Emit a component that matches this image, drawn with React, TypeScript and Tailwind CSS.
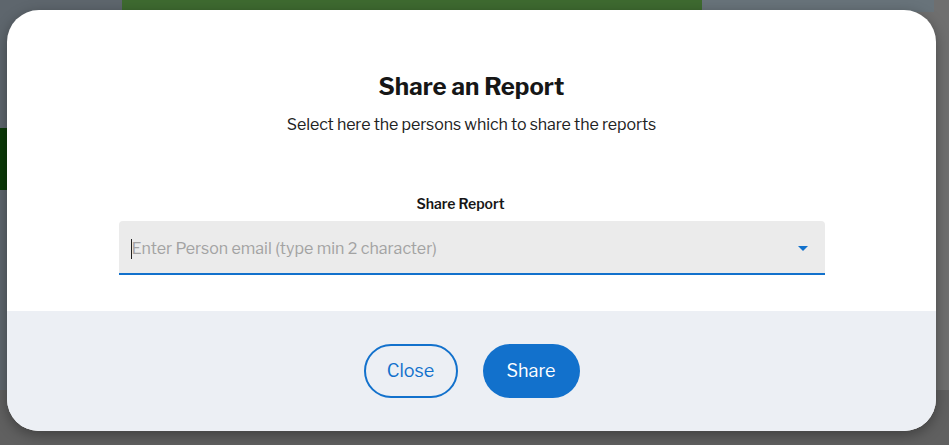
import React from "react";

const font = { fontFamily: "'Libre Franklin', Inter, 'Liberation Sans', sans-serif" };

const ShareDialog: React.FC = () => {
  return (
    <div className="relative w-[949px] h-[445px] overflow-hidden bg-[#6f6f6f]">
      {/* dimmed map behind the dialog */}
      <div className="absolute left-0 top-0 w-[122px] h-[390px] bg-[#5e666d]" />
      <div className="absolute left-0 top-[128px] w-[10px] h-[62px] bg-[#0b3a08]" />
      <div className="absolute left-[122px] top-0 w-[580px] h-[12px] bg-[#3e6a30]" />
      <div className="absolute left-[702px] top-0 w-[232px] h-[12px] bg-[#68737a]" />
      <div className="absolute left-0 top-[390px] w-[949px] h-[55px] bg-[#606060]" />

      <div
        style={font}
        className="absolute left-[7px] top-[10px] w-[929px] h-[421px] rounded-[32px] overflow-hidden bg-white shadow-[0_4px_14px_rgba(0,0,0,0.35)] flex flex-col"
      >
        <div className="h-[301px] flex flex-col items-center pt-[62px]">
          <h2 className="text-[24px] leading-[30px] font-bold text-[#161616]">Share an Report</h2>
          <p className="mt-[12px] text-[16px] leading-[22px] tracking-[-0.1px] text-[#222]">
            Select here the persons which to share the reports
          </p>
          <label className="mt-[59px] mr-[22px] text-[14px] leading-[18px] font-semibold text-[#161616]">
            Share Report
          </label>
          <div className="mt-[8px] w-[706px] h-[54px] rounded-t-[4px] bg-[#ebebeb] border-b-2 border-[#1271cc] flex items-center pt-[3px] pl-[12px] pr-[16px]">
            <span className="w-px h-[20px] bg-[#222]" />
            <span className="flex-1 text-[16px] text-[#a3a3a3]">Enter Person email (type min 2 character)</span>
            <svg width="10" height="6" viewBox="0 0 10 6" className="mr-[1px]">
              <path d="M0 0h10L5 5z" fill="#1271cc" />
            </svg>
          </div>
        </div>
        <div className="flex-1 bg-[#eceff4] flex justify-center items-center gap-[25px] pb-[1px]">
          <button className="w-[94px] h-[54px] rounded-full border-2 border-[#1271cc] text-[#1271cc] text-[18px]">
            Close
          </button>
          <button className="w-[97px] h-[54px] rounded-full bg-[#1271cc] text-white text-[18px]">Share</button>
        </div>
      </div>
    </div>
  );
};

export default function App() {
  return <ShareDialog />;
}
